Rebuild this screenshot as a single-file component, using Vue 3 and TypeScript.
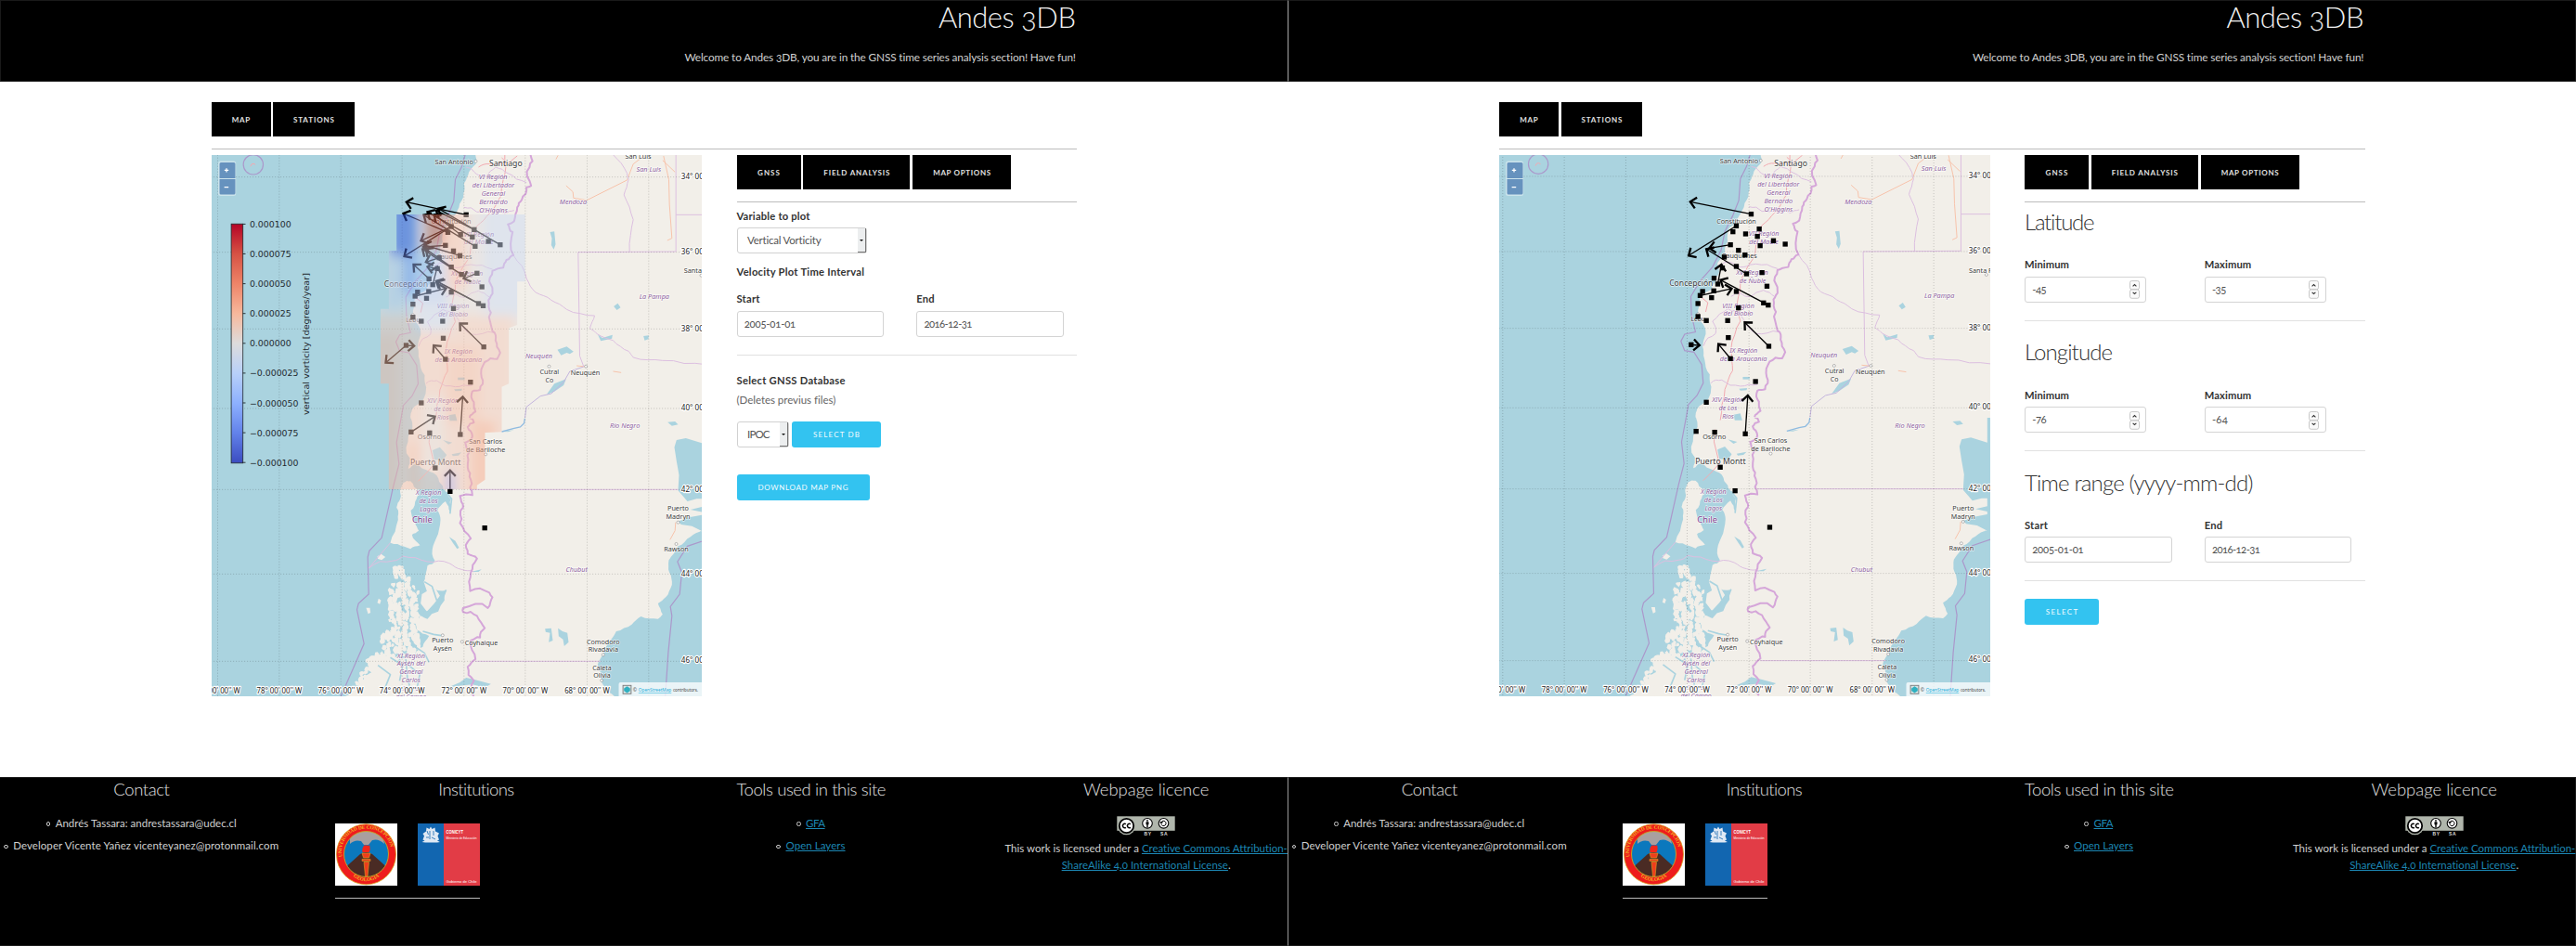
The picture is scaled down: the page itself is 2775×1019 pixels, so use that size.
<script setup lang="ts">
import type { Directive } from 'vue'

type Pt = [number, number]
type Label = [string, number, number, number, number, string]

/* Spreads the letters of an element so that its text is exactly `value` pixels wide. */
const vFit: Directive<HTMLElement, number> = {
  mounted(el, { value }) {
    const n = (el.textContent ?? '').length
    if (n < 2) return
    const gap = (value - el.getBoundingClientRect().width) / (n - 1)
    el.style.letterSpacing = `${gap}px`
    el.style.marginRight = `${-gap}px`
  },
}

function random(seed: number) {
  let s = seed
  return () => {
    s = (s * 16807) % 2147483647
    return s / 2147483647
  }
}

function parse(s: string): Pt[] {
  return s.split(' ').map((p) => p.split(',').map(Number) as Pt)
}

/* Breaks every long segment up with a small displacement, like a natural shoreline. */
function rough(s: string, amount = 0.12, seed = 7): string {
  const rnd = random(seed)
  let pts = parse(s)
  for (let k = 0; k < 2; k++) {
    const out: Pt[] = [pts[0]]
    for (let i = 1; i < pts.length; i++) {
      const [ax, ay] = pts[i - 1]
      const [bx, by] = pts[i]
      const len = Math.hypot(bx - ax, by - ay)
      if (len > 12 && len < 400) {
        const d = (rnd() - 0.5) * 2 * amount
        out.push([(ax + bx) / 2 - (by - ay) * d, (ay + by) / 2 + (bx - ax) * d])
      }
      out.push(pts[i])
    }
    pts = out
  }
  return pts.map((p) => p.map((v) => v.toFixed(1)).join(',')).join(' ')
}

const landNorth =
  rough('395,20 396,50 371,87 358,112 356,157 336,202 316,237 291,264 289,302 276,347 256,372 262,400 250,430 236,457 200,472 196,502 194,547 211,572 218,602 208,642 214,682 231,732 236,772 226,812 191,842 186,872', 0.1) +
  ' 1200,872 1200,20'
const landSouth =
  '186,-6 ' +
  rough('186,0 178,60 183,130 178,165 205,150 240,170 262,180 285,215 300,240 316,262 314,305 298,270 282,285 272,300 282,330 268,390 255,440 264,462 240,478 235,530 250,545 300,558 295,590 240,650 215,640 205,685 245,705 225,740 190,772 150,790 90,762 50,775 62,820 30,850 -4,880 -30,905', 0.16) +
  ' 850,905 ' +
  rough('850,905 800,850 790,800 810,760 830,720 850,690 900,668 930,642 985,650 1000,635 985,600 1010,580 1030,540 1022,500 1020,460 1035,440 1050,415 1090,385 1128,367', 0.1) +
  ' 1095,350 1060,345 1050,335 1085,322 1128,314 1128,305 1090,297 1128,288 1128,262 1110,262 1080,270 1050,235 1053,185 1045,140 1038,95 1045,72 1075,66 1128,82 1128,-6'
const chiloe = rough('162,210 185,205 215,235 205,262 186,300 200,340 212,365 190,378 216,412 185,424 165,416 120,404 145,330 140,290 152,262 155,225', 0.14)

const andesNorth = rough('573,20 570,60 575,120 560,125 545,165 530,190 520,235 500,245 515,270 518,345 495,360 485,385 450,395 445,440 450,460 437,490 445,530 450,590 460,620 475,660 465,680 425,690 415,740 410,780 385,785 390,820 395,850 376,870', 0.2)
const andesSouth = rough('376,0 390,15 370,30 385,60 362,80 375,110 370,160 380,200 385,250 345,253 355,290 345,340 380,390 365,420 370,440 400,455 380,500 378,560 440,565 450,580 435,615 355,615 355,628 400,640 425,680 410,710 380,720 395,780 370,805 390,850 390,900', 0.2)

const provincesNorth = [
  rough('840,20 885,80 890,100 875,150 905,230 893,333', 0.06),
  '1043,20 1043,333 727,335 732,670 745,705',
  '1043,214 1140,214',
  rough('518,345 560,420 590,465 640,490 690,520 780,540 765,580 790,600 840,620 890,655 905,675 1000,685 1140,698', 0.08),
  rough('358,190 400,205 450,195 490,210 520,200', 0.14),
  rough('365,60 390,75 430,90 460,60 500,80 560,110', 0.14),
  rough('262,380 300,370 340,385 380,375 450,390', 0.14),
  rough('300,480 330,470 360,480 405,460 440,480', 0.14),
  rough('211,640 250,600 240,560 290,520 330,540 380,600 455,595', 0.14),
  rough('235,760 270,750 330,770 385,765', 0.14),
]
const provincesSouth = [
  '385,232 1050,232',
  '395,787 800,787',
  rough('50,486 130,462 160,447 240,465 310,470 350,490 390,498', 0.12),
  '50,486 120,404',
]
const maritimeNorth = '362,20 350,60 330,100 325,170 305,220 280,270 268,330 240,385 200,430 170,480 172,540 185,595 150,602 138,625 150,655 180,660 205,700 210,760 190,800 162,830 155,870'
const maritimeSouth = '155,0 140,80 148,150 130,220 92,388 52,430 47,450 50,570 17,600 12,620 35,730 0,810 -40,900'
const roads = [
  rough('490,20 485,100 480,150 440,210 400,250 378,340 335,420 320,500 330,560 300,650 305,720 280,780 265,880', 0.07),
  '480,30 500,48 530,24',
  '200,480 225,500 218,530',
  rough('405,60 440,50 485,45', 0.1),
]
const orangeRoads = [
  '688,120 710,140 712,160 755,167 885,102 905,50 940,24',
  '1003,24 1020,100 1022,180 1030,290 1015,297',
  '1000,38 1040,76',
  '722,702 752,705',
  '840,720 866,724',
  '655,35 662,22',
]
const lakesNorth = [
  '636,270 650,268 654,310 648,326 640,312 642,290',
  '842,510 855,500 864,514 852,522',
  '660,650 690,640 712,656 700,664 690,660 672,668',
  '625,795 650,760 688,745 680,765 650,785',
  '790,600 805,612 838,602 836,614 800,622',
  '938,606 955,604 954,616 942,620',
  '1016,884 1040,882 1050,892 1030,896',
  '338,740 360,740 360,748 338,748',
  '326,778 352,776 350,783 330,784',
  '308,862 330,858 336,880 312,880',
]
const lakesSouth = [
  '256,105 280,95 302,120 290,138 262,135',
  '290,72 320,80 308,86',
  '318,118 350,112 340,122 322,124',
  '310,385 330,398 342,420 336,424 322,404',
  '620,682 640,680 645,720 632,725 636,695 622,692',
  '662,680 676,690 692,695 696,725 682,738 678,716 664,706',
  '380,498 415,490 405,498',
  '365,840 400,848 445,860 425,872 385,862 330,868 290,878 345,855',
  '480,45 520,40 500,46',
]
const channels = [
  '300,556 285,595 250,625 225,630',
  '225,690 260,700 285,704',
  '200,740 230,760 245,790',
  '230,530 255,545 270,590',
  '300,240 318,262 313,310',
  '180,800 215,830 205,880',
  '120,775 160,800 150,850',
  '80,800 120,830 100,880',
  '170,780 175,840 190,895',
]

/* The archipelago: irregular islets on a loose grid, separated by narrow channels. */
function makeIslets(): string[] {
  const rnd = random(41)
  const out: string[] = []
  for (let y = 485; y < 905; y += 13) {
    const left = y < 540 ? 132 : y < 700 ? 116 : y < 760 ? 90 : 60 - (y - 760) * 0.45
    const right = y < 540 ? 186 : 212
    for (let x = left + rnd() * 8; x < right; x += 14) {
      if (rnd() < 0.14) continue
      const cx = x + (rnd() - 0.5) * 10
      const cy = y + (rnd() - 0.5) * 9
      const size = 3 + rnd() * 5
      const pts: string[] = []
      for (let a = 0; a < 9; a++) {
        const r = size + rnd() * 5
        pts.push(`${(cx + Math.cos(a * 0.698) * r).toFixed(1)},${(cy + Math.sin(a * 0.698) * r * 1.2).toFixed(1)}`)
      }
      out.push(pts.join(' '))
    }
  }
  out.push('78,448 90,440 104,450 92,460 80,456', '42,614 54,614 56,630 48,634', '82,584 90,590 86,602 78,598')
  out.push('245,490 262,500 272,520 262,545 280,575 262,600 238,626 218,600 222,570 238,560 228,530')
  return out
}
const islets = makeIslets()

const gridX = [-438, -239, -40, 158, 358, 556, 756, 955]
const gridY = [92, 335, 583, 840, 1102, 1375, 1657]
const lonLabels: [string, number][] = [80, 78, 76, 74, 72, 70, 68].map((d, i) => [`${d}° 00' 00'' W`, gridX[i]])
const latLabels: [string, number][] = [34, 36, 38, 40, 42, 44, 46].map((d, i) => [`${d}° 00' 00'' N`, [99, 341, 590, 845, 1109, 1382, 1661][i]])

const labelsNorth: Label[] = [
  ['San Antonio', 326, 50, 124, 22, 'city'], ['Santiago', 493, 58, 107, 26, 'city'],
  ['VI Región', 452, 99, 92, 21, 'region'], ['del Libertador', 453, 126, 136, 21, 'region'],
  ['General', 453, 153, 76, 21, 'region'], ['Bernardo', 453, 180, 92, 21, 'region'], ["O'Higgins", 453, 207, 92, 21, 'region'],
  ['Constitución', 317, 244, 128, 22, 'city'],
  ['VII Región', 406, 284, 98, 21, 'region'], ['del Maule', 406, 310, 95, 21, 'region'],
  ['Cauquenes', 327, 357, 114, 22, 'city'],
  ['XVI Región', 368, 411, 103, 21, 'region'], ['de Ñuble', 370, 437, 86, 21, 'region'],
  ['Concepción', 171, 447, 142, 26, 'city'],
  ['VIII Región', 323, 517, 104, 21, 'region'], ['del Biobío', 323, 543, 96, 21, 'region'],
  ['Lebu', 193, 560, 46, 22, 'city'],
  ['IX Región', 340, 662, 90, 21, 'region'], ['de la Araucanía', 340, 689, 152, 21, 'region'],
  ['XIV Región', 290, 822, 103, 21, 'region'], ['de Los', 290, 849, 58, 21, 'region'], ['Ríos', 290, 876, 38, 21, 'region'],
  ['San Luis', 921, 34, 84, 22, 'city'], ['San Luis', 955, 74, 80, 21, 'region'],
  ['Mendoza', 711, 181, 88, 21, 'region'], ['La Pampa', 973, 486, 97, 21, 'region'],
  ['Santa Rosa', 1125, 403, 112, 22, 'city'],
  ['Neuquén', 600, 677, 87, 21, 'region'], ['Neuquén', 750, 731, 95, 22, 'city'],
  ['Cutral', 634, 728, 62, 22, 'city'], ['Co', 634, 755, 26, 22, 'city'],
  ['Río Negro', 878, 904, 97, 21, 'region'],
]
const labelsSouth: Label[] = [
  ['Osorno', 246, 70, 76, 22, 'city'], ['San Carlos', 428, 83, 107, 22, 'city'], ['de Bariloche', 428, 110, 127, 22, 'city'],
  ['Puerto Montt', 266, 152, 163, 26, 'city'],
  ['X Región', 243, 249, 83, 21, 'region'], ['de Los', 243, 275, 60, 21, 'region'], ['Lagos', 243, 302, 56, 21, 'region'],
  ['Chile', 223, 340, 65, 28, 'country'],
  ['Puerto', 1050, 301, 69, 22, 'city'], ['Madryn', 1050, 328, 78, 22, 'city'], ['Rawson', 1044, 432, 80, 22, 'city'],
  ['Chubut', 722, 499, 70, 21, 'region'],
  ['Puerto', 289, 726, 70, 22, 'city'], ['Aysén', 289, 752, 60, 22, 'city'], ['Coyhaique', 414, 734, 107, 22, 'city'],
  ['XI Región', 187, 776, 90, 21, 'region'], ['Aysén del', 187, 802, 90, 21, 'region'], ['General', 187, 829, 76, 21, 'region'],
  ['Carlos', 187, 856, 60, 21, 'region'], ['Ibáñez', 187, 882, 66, 21, 'region'], ['del Campo', 187, 908, 100, 21, 'region'],
  ['Comodoro', 808, 731, 107, 22, 'city'], ['Rivadavia', 808, 757, 97, 22, 'city'],
  ['Caleta', 804, 815, 62, 22, 'city'], ['Olivia', 804, 841, 56, 22, 'city'],
]
const townsNorth = parse('396,41 1125,410 633,704 752,704 193,537')
const townsSouth = parse('428,118 1050,338 1044,408 289,703 352,724 808,766 803,849')

const stations = parse(
  '365,214 317,252 306,271 391,262 347,278 385,286 437,300 475,311 394,316 298,313 324,331 345,346 278,353 272,388 317,383 350,407 400,403 245,421 257,440 416,447 208,464 244,462 317,464 237,484 200,477 193,503 405,501 420,508 324,517 193,545 220,558 289,558 291,613 171,636 422,641 298,681 379,755 220,822 187,916 247,919 346,924 265,1032 313,1108 425,1226',
)
const arrowsLeft = parse(
  '365,214 172,173 306,271 162,210 394,316 228,215 385,286 240,205 391,262 268,200 475,311 275,194 347,278 262,214 317,252 165,348 298,313 226,318 345,346 230,312 317,252 219,298 350,407 224,325 278,353 235,367 317,383 235,325 245,421 195,375 257,440 272,382 272,388 240,382 400,403 357,420 420,508 268,428 405,501 272,430 200,477 300,452 422,641 345,565 298,681 260,636 171,636 105,692 171,636 197,638 346,924 354,802 187,916 264,866 313,1108 313,1040',
)
const arrowsRight = parse(
  '365,214 168,174 317,252 163,348 298,313 230,324 350,407 220,327 257,440 269,377 200,477 302,455 420,508 266,427 422,641 344,564 298,681 259,634 171,636 198,638 346,924 354,800',
)
function arrowPaths(pts: Pt[]): { line: string; head: string }[] {
  const out: { line: string; head: string }[] = []
  for (let i = 0; i < pts.length; i += 2) {
    const [ax, ay] = pts[i]
    const [bx, by] = pts[i + 1]
    const t = Math.atan2(ay - by, ax - bx)
    const arm = (d: number) => `${(bx + 26 * Math.cos(t + d)).toFixed(1)} ${(by + 26 * Math.sin(t + d)).toFixed(1)}`
    out.push({ line: `M${ax} ${ay}L${bx} ${by}`, head: `M${arm(0.76)}L${bx} ${by}L${arm(-0.76)}` })
  }
  return out
}

const fieldShape = '140,213 556,213 556,430 530,430 530,570 503,580 503,760 480,770 480,916 426,918 426,1070 400,1088 400,1101 115,1101 115,760 88,760 88,518 115,518 115,330 140,330'
const scaleTicks = ['0.000100', '0.000075', '0.000050', '0.000025', '0.000000', '−0.000025', '−0.000050', '−0.000075', '−0.000100']

const panels = [
  { id: 'analysis', dx: 0, dy: 0, arrows: arrowPaths(arrowsLeft) },
  { id: 'options', dx: -2.7, dy: -0.7, arrows: arrowPaths(arrowsRight) },
]
const ranges = [
  { title: 'Latitude', width: 76, min: '-45', minW: 15.5, max: '-35', maxW: 15.5 },
  { title: 'Longitude', width: 95, min: '-76', minW: 15.5, max: '-64', maxW: 17 },
]
</script>

<template>
  <div class="screen">
    <section v-for="(p, i) in panels" :key="p.id" class="panel">
      <header class="top">
        <h1><span v-fit="148" class="fit">Andes 3DB</span></h1>
        <p><span v-fit="422" class="fit">Welcome to Andes 3DB, you are in the GNSS time series analysis section! Have fun!</span></p>
      </header>

      <main>
        <nav class="tabs">
          <button class="tab" style="width: 64px"><span v-fit="19.5" class="fit">MAP</span></button>
          <button class="tab" style="width: 87.5px"><span v-fit="44" class="fit">STATIONS</span></button>
        </nav>
        <div class="rule first"></div>

        <div class="columns">
          <svg class="map" viewBox="227.5 167 528.5 582.6" width="528.5" height="582.6">
            <defs>
              <clipPath :id="'field-' + p.id"><polygon :points="fieldShape" /></clipPath>
              <linearGradient :id="'scale-' + p.id" x1="0" y1="0" x2="0" y2="1">
                <stop offset="0" stop-color="#b40426" /><stop offset=".125" stop-color="#d65244" />
                <stop offset=".25" stop-color="#ee8468" /><stop offset=".375" stop-color="#f7b89c" />
                <stop offset=".5" stop-color="#dddcdc" /><stop offset=".625" stop-color="#b8d0f9" />
                <stop offset=".75" stop-color="#8db0fe" /><stop offset=".875" stop-color="#6282ea" />
                <stop offset="1" stop-color="#3b4cc0" />
              </linearGradient>
              <filter :id="'soft-' + p.id" x="-60%" y="-60%" width="220%" height="220%"><feGaussianBlur stdDeviation="18" /></filter>
            </defs>
            <rect x="227" y="166" width="530" height="585" fill="#aad3df" />

            <g :transform="`translate(${p.dx} ${p.dy})`">
              <g transform="translate(380 450) scale(.33333)" class="geo">
                <polygon :points="landSouth" class="land" />
                <rect x="1120" y="367" width="30" height="540" fill="#aad3df" />
                <polygon :points="chiloe" class="land" />
                <polygon v-for="s in islets" :key="s" :points="s" class="land" />
                <polyline v-for="s in channels" :key="s" :points="s" class="channel" />
                <polygon v-for="s in lakesSouth" :key="s" :points="s" class="lake" />
                <polyline points="555,0 552,18 540,30 520,34 480,45" class="river" />
                <polyline points="248,40 245,80 262,150 235,180 210,205" class="road" />
                <polyline points="1042,338 1040,365 1024,394" class="road orange" />
                <polyline v-for="s in provincesSouth" :key="s" :points="s" class="province" />
                <polyline :points="maritimeSouth" class="sea-border" />
                <polyline points="1140,395 1080,415 1048,465 1062,500 1055,570 1025,610 1030,640 1018,760 1008,910" class="sea-border" />
                <polyline :points="andesSouth" class="border" />
              </g>
              <g transform="translate(380 160) scale(.33333)" class="geo">
                <polygon :points="landNorth" class="land" />
                <polygon v-for="s in lakesNorth" :key="s" :points="s" class="lake" />
                <polyline points="745,705 700,720 680,755 640,792 605,800 560,835 555,870" class="river pale" />
                <polyline v-for="s in roads" :key="s" :points="s" class="road" />
                <polyline v-for="s in orangeRoads" :key="s" :points="s" class="road orange" />
                <polyline v-for="s in provincesNorth" :key="s" :points="s" class="province" />
                <polyline :points="maritimeNorth" class="sea-border" />
                <polyline :points="andesNorth" class="border" />
                <circle cx="-323" cy="52" r="32" class="sea-border" />
                <path d="M-332 58q2-10 10-9l6 3" class="road" />
              </g>
              <g transform="translate(380 450) scale(.33333)">
                <circle v-for="t in townsSouth" :key="t.join()" :cx="t[0]" :cy="t[1]" r="4.5" class="town" />
                <text v-for="l in labelsSouth" :key="l.join()" :x="l[1]" :y="l[2]" :textLength="l[3]" :font-size="l[4]" lengthAdjust="spacingAndGlyphs" :class="l[5]">{{ l[0] }}</text>
              </g>
              <g transform="translate(380 160) scale(.33333)">
                <circle v-for="t in townsNorth" :key="t.join()" :cx="t[0]" :cy="t[1]" r="4.5" class="town" />
                <text v-for="l in labelsNorth" :key="l.join()" :x="l[1]" :y="l[2]" :textLength="l[3]" :font-size="l[4]" lengthAdjust="spacingAndGlyphs" :class="l[5]">{{ l[0] }}</text>
                <line v-for="x in gridX" :key="'x' + x" :x1="x" :x2="x" y1="20" y2="1775" class="grid" />
                <line v-for="y in gridY" :key="'y' + y" x1="-460" x2="1140" :y1="y" :y2="y" class="grid" />
                <g v-for="(a, n) in p.arrows" :key="n">
                  <path :d="a.line" class="shaft" />
                  <path :d="a.head" class="head" />
                </g>
                <rect v-for="s in stations" :key="s.join()" :x="s[0] - 8" :y="s[1] - 8" width="16" height="16" />
                <g v-if="i === 0" :clip-path="`url(#field-${p.id})`" opacity=".49">
                  <rect x="80" y="210" width="480" height="900" fill="#e4dcdc" />
                  <g :filter="`url(#soft-${p.id})`">
                    <rect x="60" y="540" width="460" height="620" fill="#f3c9b8" />
                    <rect x="60" y="600" width="90" height="540" fill="#f2b9a2" />
                    <rect x="300" y="640" width="110" height="250" fill="#f5b9a2" />
                    <rect x="380" y="880" width="80" height="260" fill="#f8a98a" />
                    <rect x="180" y="950" width="30" height="160" fill="#f7b297" />
                    <rect x="225" y="800" width="70" height="240" fill="#e8d8d2" />
                    <rect x="420" y="180" width="180" height="360" fill="#ccd9f0" />
                    <rect x="105" y="320" width="60" height="200" fill="#c3d0e8" />
                    <rect x="175" y="340" width="130" height="160" fill="#b4cbf5" />
                    <rect x="200" y="500" width="120" height="90" fill="#ccd8ee" />
                    <rect x="120" y="170" width="85" height="180" fill="#2f54dc" />
                    <rect x="165" y="340" width="30" height="130" fill="#5a86f0" />
                    <rect x="234" y="170" width="64" height="150" fill="#dd6448" />
                    <rect x="300" y="200" width="65" height="260" fill="#f6bfaa" />
                    <rect x="304" y="1045" width="20" height="90" fill="#4a74f0" />
                  </g>
                </g>
                <text v-for="l in lonLabels" :key="l[0]" :x="l[1]" y="1761" textLength="146" lengthAdjust="spacingAndGlyphs" class="degree" text-anchor="middle">{{ l[0] }}</text>
              </g>
            </g>
            <text v-for="l in latLabels" :key="l[0]" :x="733.3" :y="160 + p.dy + l[1] / 3" class="degree lat" textLength="49" lengthAdjust="spacingAndGlyphs">{{ l[0] }}</text>

            <g v-if="i === 0">
              <rect x="248.6" y="241.2" width="12.6" height="257.6" :fill="`url(#scale-${p.id})`" stroke="#20272b" stroke-width=".8" />
              <g v-for="(t, n) in scaleTicks" :key="t">
                <path :d="`M261 ${241.4 + n * 32.1}h3`" stroke="#20272b" stroke-width=".9" />
                <text x="268.4" :y="245 + n * 32.1" :textLength="t.length > 8 ? 52.6 : 44.8" class="tick">{{ t }}</text>
              </g>
              <text transform="translate(332.4 447) rotate(-90)" textLength="153" lengthAdjust="spacingAndGlyphs" class="tick">vertical vorticity [degrees/year]</text>
            </g>

            <rect x="234.5" y="173.5" width="19.2" height="37.4" rx="2.5" fill="#fff" fill-opacity=".4" />
            <path d="M236 192v-15.500a1.500 1.500 0 0 1 1.500-1.500h14a1.500 1.500 0 0 1 1.500 1.500v15.500zM236 193h17v15a1.500 1.500 0 0 1-1.500 1.500h-14a1.500 1.500 0 0 1-1.500-1.500z" fill="#6692be" />
            <path d="M241.300 183.400h4.400M243.500 181.200v4.400M241.100 201.700h4.600" stroke="#fff" stroke-width="1.300" />

            <path d="M666 750v-13a2 2 0 0 1 2-2h89v15z" fill="#fff" fill-opacity=".75" />
            <rect x="670.6" y="738.3" width="8.800" height="9" fill="#d9e5e6" stroke="#777" stroke-width=".9" />
            <path d="M675 739.300l3.300 2.300v2.700l-3.300 2.300-3.300-2.300v-2.700z" fill="#2fb0c0" />
            <text x="681.200" y="745.4" class="credit" textLength="4.300">©</text>
            <text x="687.300" y="745.2" class="credit link" textLength="35.500" lengthAdjust="spacingAndGlyphs">OpenStreetMap</text>
            <text x="724.500" y="745.2" class="credit" textLength="27" lengthAdjust="spacingAndGlyphs">contributors.</text>
          </svg>

          <div class="side">
            <nav class="tabs">
              <button class="tab" style="width: 69px"><span v-fit="24" class="fit">GNSS</span></button>
              <button class="tab" style="width: 115.3px"><span v-fit="71" class="fit">FIELD ANALYSIS</span></button>
              <button class="tab" style="width: 106px"><span v-fit="62" class="fit">MAP OPTIONS</span></button>
            </nav>
            <div class="rule"></div>

            <form v-if="i === 0" class="analysis">
              <label class="name variable"><span v-fit="79" class="fit">Variable to plot</span></label>
              <div class="select" style="width: 140px"><span v-fit="80" class="fit">Vertical Vorticity</span><i class="drop"></i></div>
              <label class="name velocity"><span v-fit="137.5" class="fit">Velocity Plot Time Interval</span></label>
              <div class="pair dates">
                <div><label class="name"><span v-fit="25" class="fit">Start</span></label><div class="field date"><span v-fit="55.5" class="fit">2005-01-01</span></div></div>
                <div><label class="name"><span v-fit="19.5" class="fit">End</span></label><div class="field date"><span v-fit="52" class="fit">2016-12-31</span></div></div>
              </div>
              <hr />
              <label class="name db"><span v-fit="117" class="fit">Select GNSS Database</span></label>
              <p class="note"><span v-fit="106.5" class="fit">(Deletes previus files)</span></p>
              <div class="choose">
                <div class="select" style="width: 56.5px"><span v-fit="24.5" class="fit">IPOC</span><i class="drop"></i></div>
                <button class="action" style="width: 96px"><span v-fit="50" class="fit">SELECT DB</span></button>
              </div>
              <button class="action download" style="width: 143px"><span v-fit="97" class="fit">DOWNLOAD MAP PNG</span></button>
            </form>

            <form v-else class="ranges">
              <template v-for="r in ranges" :key="r.title">
                <h2><span v-fit="r.width" class="fit">{{ r.title }}</span></h2>
                <div class="pair">
                  <div>
                    <label class="name"><span v-fit="48" class="fit">Minimum</span></label>
                    <div class="field number"><span v-fit="r.minW" class="fit">{{ r.min }}</span>
                      <svg class="spin" viewBox="0 0 11 20" width="11" height="20"><rect x=".5" y=".5" width="10" height="9.300" rx="2" /><rect x=".5" y="10" width="10" height="9.300" rx="2" /><path d="M3.600 6.300l1.900-1.700 1.900 1.700M3.600 12.800l1.900 1.700 1.900-1.700" /></svg>
                    </div>
                  </div>
                  <div>
                    <label class="name"><span v-fit="50.5" class="fit">Maximum</span></label>
                    <div class="field number"><span v-fit="r.maxW" class="fit">{{ r.max }}</span>
                      <svg class="spin" viewBox="0 0 11 20" width="11" height="20"><rect x=".5" y=".5" width="10" height="9.300" rx="2" /><rect x=".5" y="10" width="10" height="9.300" rx="2" /><path d="M3.600 6.300l1.900-1.700 1.900 1.700M3.600 12.800l1.900 1.700 1.900-1.700" /></svg>
                    </div>
                  </div>
                </div>
                <hr />
              </template>
              <h2><span v-fit="246.5" class="fit">Time range (yyyy-mm-dd)</span></h2>
              <div class="pair">
                <div><label class="name"><span v-fit="25" class="fit">Start</span></label><div class="field date"><span v-fit="55.5" class="fit">2005-01-01</span></div></div>
                <div><label class="name"><span v-fit="19.5" class="fit">End</span></label><div class="field date"><span v-fit="52" class="fit">2016-12-31</span></div></div>
              </div>
              <hr />
              <button class="action" style="width: 80px"><span v-fit="34.5" class="fit">SELECT</span></button>
            </form>
          </div>
        </div>
      </main>

      <footer>
        <div class="cell">
          <h3><span v-fit="60.5" class="fit">Contact</span></h3>
          <ul>
            <li><i class="dot"></i><span v-fit="195" class="fit">Andrés Tassara: andrestassara@udec.cl</span></li>
            <li><i class="dot"></i><span v-fit="286" class="fit">Developer Vicente Yañez vicenteyanez@protonmail.com</span></li>
          </ul>
        </div>
        <div class="cell">
          <h3><span v-fit="82.5" class="fit">Institutions</span></h3>
          <div class="logos">
            <svg viewBox="0 0 67 67" width="67" height="67">
              <defs>
                <path :id="'arc-' + p.id" d="M7.500 36C4.500 17 17 5.700 33.500 5.700S62.500 17 59.500 36" />
                <path :id="'low-' + p.id" d="M14 51C24 66 43 66 53 51" />
                <clipPath :id="'disc-' + p.id"><ellipse cx="33.500" cy="33" rx="24" ry="24.500" /></clipPath>
              </defs>
              <rect width="67" height="67" fill="#fff" />
              <ellipse cx="33.500" cy="33.300" rx="32" ry="32.500" fill="#ee1c1c" stroke="#d8a31c" stroke-width=".8" />
              <g :clip-path="`url(#disc-${p.id})`">
                <rect width="67" height="67" fill="#0b78bd" />
                <path d="M6 52L27 33q6-4 13 0L61 52 50 66H18z" fill="#4a2b24" />
                <path d="M16 22V8h34l3 14q-6-6-13-4l-4 5h-5l-3-4q-7-2-12 3z" fill="#a99f9f" />
              </g>
              <ellipse cx="33.500" cy="33" rx="24" ry="24.500" fill="none" stroke="#d8a31c" stroke-width=".9" />
              <path d="M29.500 31q-1-5 2.500-8 1 2 1.700 0 2.300 2 3.300 0 1.500 5-.5 8z" fill="#f3261b" />
              <path d="M29 32h9l-1.500 5h-6zM29 38.500h9v2h-9zM31 41.500h5.500L35 57h-2.500z" fill="#ef3d1c" stroke="#e0a020" stroke-width=".6" />
              <text class="seal"><textPath :href="'#arc-' + p.id" textLength="82">UNIVERSIDAD DE CONCEPCION</textPath></text>
              <text class="seal"><textPath :href="'#low-' + p.id" startOffset="8" textLength="31">GEOLOGIA</textPath></text>
            </svg>
            <svg viewBox="0 0 67 67" width="67" height="67">
              <rect width="28" height="67" fill="#1266b0" />
              <rect x="28" width="39" height="67" fill="#e23c46" />
              <path d="M14 3.500l1.500 2.500 3-1.500.5 4 4 2-1.500 3 1.500 4-2 1 3 1.500-3 .5H8l-3.500-.5 3-1.500-2-1L7 13.500 5.500 11l3.500-2.500.5-4 3 1.500z" fill="#dfe9f4" />
              <path d="M10 8l1.500 4M17 8v5M9 15h3M15 15l4 2M13 8v9" stroke="#1266b0" stroke-width=".8" fill="none" />
              <text x="30.500" y="11.300" class="gov" font-size="5" font-weight="700" textLength="18.500" lengthAdjust="spacingAndGlyphs">CONICYT</text>
              <text x="30.500" y="16.800" class="gov" font-size="3.300" textLength="33" lengthAdjust="spacingAndGlyphs">Ministerio de Educación</text>
              <text x="30.500" y="63.500" class="gov" font-size="4" textLength="33" lengthAdjust="spacingAndGlyphs">Gobierno de Chile</text>
            </svg>
          </div>
          <div class="underline"></div>
        </div>
        <div class="cell">
          <h3><span v-fit="161" class="fit">Tools used in this site</span></h3>
          <ul>
            <li><i class="dot"></i><a v-fit="21" class="fit">GFA</a></li>
            <li><i class="dot"></i><a v-fit="64" class="fit">Open Layers</a></li>
          </ul>
        </div>
        <div class="cell">
          <h3><span v-fit="135.5" class="fit">Webpage licence</span></h3>
          <svg class="badge" viewBox="0 0 63 22" width="63" height="22">
            <rect width="63" height="22" fill="#000" />
            <rect x=".3" y=".3" width="62.4" height="15.500" fill="#b0b6ac" />
            <circle cx="10.500" cy="10.500" r="9.800" fill="#b0b6ac" />
            <circle cx="10.500" cy="10.500" r="7.700" fill="#fff" stroke="#000" stroke-width="1.800" />
            <path d="M9.900 8.700a2.200 2.200 0 1 0 0 3.600M14.900 8.700a2.200 2.200 0 1 0 0 3.600" fill="none" stroke="#000" stroke-width="1.500" />
            <circle cx="33" cy="7.800" r="5.300" fill="#fff" stroke="#000" stroke-width="1.100" />
            <circle cx="33" cy="4.900" r=".9" /><path d="M31.500 6.300h3v3h-.8v3h-1.400v-3h-.8z" />
            <circle cx="50.500" cy="7.800" r="5.300" fill="#fff" stroke="#000" stroke-width="1.100" />
            <path d="M48 6.600a2.700 2.700 0 1 1 0 2.600M46.800 6.600h2.600l-1.300 1.700z" fill="none" stroke="#000" stroke-width="1" />
            <text x="29.500" y="21.200" class="by" textLength="7.500">BY</text>
            <text x="47" y="21.200" class="by" textLength="7.500">SA</text>
          </svg>
          <p class="licence">
            <span><b v-fit="144.5" class="fit">This work is licensed under a</b><a v-fit="157" class="fit gap">Creative Commons Attribution-</a></span>
            <span><a v-fit="179.5" class="fit">ShareAlike 4.0 International License</a><b>.</b></span>
          </p>
        </div>
      </footer>
    </section>
  </div>
</template>

<style>
body { background: #fff; }
</style>

<style scoped>
.screen { display: flex; width: 2775px; height: 1019px; overflow: hidden; font-family: Lato, 'Open Sans', sans-serif; font-size: 11.5px; color: #333; font-variant-numeric: oldstyle-nums; }
.panel { flex: none; width: 1387.5px; height: 1019px; display: flex; flex-direction: column; }
.fit { display: inline-block; white-space: nowrap; }
h1, h2, h3, p, ul { margin: 0; padding: 0; font-weight: 300; }
.top { box-sizing: border-box; height: 88px; padding-right: 227.5px; background: #000; border: 1px solid #1a1a1a; color: #f2f2f2; text-align: right; }
.top h1 { height: 36px; line-height: 34px; font-size: 31px; }
.top p { margin-top: 15.5px; height: 17px; line-height: 17px; font-size: 11.8px; font-weight: 400; color: #d0d0d0; }
.panel:first-child .top, .panel:first-child footer { border-right-color: #999; }
main { height: 749px; box-sizing: border-box; padding: 22px 227.5px 0; }
.tabs { display: flex; gap: 2.7px; height: 37px; }
.tab, .action { flex: none; display: flex; align-items: center; justify-content: center; box-sizing: border-box; border: 0; padding: 0; margin: 0; font-family: Lato, sans-serif; font-weight: 700; font-size: 8px; color: #fff; background: #000; }
.tab { height: 37px; color: #e0e0e0; }
.rule { height: 1px; background: #bcbcbc; margin-top: 13px; }
.rule.first { margin: 13px 0 6px; }
.columns { display: flex; gap: 37.5px; }
.map { flex: none; display: block; }
.side { flex: 1; min-width: 0; }
.name { display: block; height: 14px; line-height: 15.5px; font-weight: 700; font-size: 11.2px; color: #333; }
form .name + .field { margin-top: 6.6px; }
.variable { margin-top: 7px; }
.select { position: relative; box-sizing: border-box; height: 28px; line-height: 26px; border: 1px solid #d1d1d1; border-radius: 3px; padding-left: 10.5px; font-size: 11.5px; color: #555; }
.variable + .select { margin-top: 6px; }
.drop { position: absolute; right: 0; top: 0; width: 8px; height: 25px; background: #eceeef; border-right: 1px solid #777; border-bottom: 1px solid #777; }
.drop::after { content: ''; position: absolute; left: 2px; top: 12px; border: 2px solid transparent; border-top: 2.500px solid #111; border-bottom: 0; }
.velocity { margin-top: 11.8px; }
.pair { display: grid; grid-template-columns: 158.5px 158.5px; gap: 35.2px; }
.dates { margin-top: 15.6px; }
.field { position: relative; box-sizing: border-box; height: 27.6px; line-height: 26px; border: 1px solid #d4d4d4; border-radius: 3px; padding-left: 7.2px; color: #505050; font-size: 11.3px; }
.number { width: 131px; }
.spin { position: absolute; right: 6.5px; top: 3.5px; fill: #fafafa; stroke: #bbb; stroke-width: .8; }
.spin path { fill: none; stroke: #333; stroke-width: 1.100; }
hr { height: 1px; border: 0; margin: 19.400px 0 0; background: #e1e1e1; }
.db { margin-top: 19px; }
.note { margin-top: 7.4px; height: 14px; line-height: 15px; color: #666; font-weight: 400; }
.choose { display: flex; gap: 3px; margin-top: 16.600px; }
.action { height: 28px; border-radius: 3px; background: #33c3f0; font-weight: 400; color: #f4fbfe; }
.download { margin-top: 29px; }
.ranges h2 { height: 26px; line-height: 27px; font-size: 24px; color: #333; }
.ranges h2:first-child { margin-top: 7.2px; }
.ranges hr + h2 { margin-top: 19.4px; }
.ranges .pair { margin-top: 26.2px; }
.ranges .action { margin-top: 18.500px; }

footer { flex: 1; box-sizing: border-box; display: flex; gap: 55.500px; background: #000; border: 1px solid #1a1a1a; border-left: 0; color: #d0d0d0; }
.cell { flex: none; width: 305.200px; text-align: center; }
.cell:last-child { margin-right: -4px; }
h3 { height: 26px; line-height: 25px; font-size: 18.500px; color: #e0e0e0; }
ul { list-style: none; margin-top: 10.500px; font-weight: 400; }
li { display: flex; justify-content: center; align-items: center; height: 24.700px; line-height: 24.700px; }
.dot { flex: none; width: 2.600px; height: 2.600px; border: 1px solid #ccc; border-radius: 50%; margin: 1px 5.500px 0 -1px; }
a { color: #1c87b4; text-decoration: underline; }
b { font-weight: 400; }
.logos { display: flex; gap: 22px; margin-top: 23px; height: 67px; }
.underline { width: 156px; height: 1px; background: #bbb; margin-top: 13px; }
.badge { display: block; margin: 14.500px auto 0 121px; }
.licence { font-size: 11.500px; margin-top: 4.500px; font-weight: 400; }
.licence > span { display: flex; justify-content: center; height: 17.500px; line-height: 17.500px; white-space: nowrap; }
.gap { margin-left: 3px; }
.seal { font-family: 'Liberation Serif', serif; font-size: 5.500px; font-weight: 700; fill: #f3b521; }
.gov { font-family: 'Liberation Sans', sans-serif; fill: #fff; }
.by { font-family: 'Liberation Sans', sans-serif; font-size: 5px; font-weight: 700; fill: #ddd; }

.land { fill: #f2efe9; }
.lake { fill: #aad3df; }
.channel { fill: none; stroke: #aad3df; stroke-width: 5; stroke-linejoin: round; }
.river { fill: none; stroke: #8fbbe0; stroke-width: 4; }
.river.pale { stroke: #c3b4dd; stroke-width: 3; }
.road { fill: none; stroke: #f3a9b0; stroke-width: 3; }
.road.orange { stroke: #f7c3ab; }
.province { fill: none; stroke: #dcbfe0; stroke-width: 3; }
.sea-border { fill: none; stroke: #ab98cb; stroke-width: 3.600; }
.border { fill: none; stroke: #d5a6d9; stroke-width: 6; stroke-linejoin: round; }
.town { fill: #fff; stroke: #777; stroke-width: 1.500; }
.city, .region, .country { font-family: 'Noto Sans', sans-serif; text-anchor: middle; paint-order: stroke; stroke: #fff; stroke-opacity: .7; stroke-width: 4; stroke-linejoin: round; fill: #3a3a3a; }
.region { font-style: italic; fill: #8f62a0; }
.country { fill: #86408f; }
.grid { stroke: #000; stroke-opacity: .2; stroke-width: 3; stroke-dasharray: 3 6; }
.shaft { stroke: #000; stroke-width: 4; fill: none; }
.head { stroke: #000; stroke-width: 7; fill: none; }
.degree { font-family: 'Noto Sans', sans-serif; font-size: 25px; font-variant-numeric: normal; paint-order: stroke; stroke: #fff; stroke-width: 7; stroke-linejoin: round; fill: #222; }
.lat { font-size: 8.300px; stroke-width: 2.300px; }
.tick { font-family: 'DejaVu Sans', sans-serif; font-size: 9.400px; font-variant-numeric: normal; fill: #1f2a2f; }
.credit { font-family: 'Noto Sans', sans-serif; font-size: 5.200px; fill: #444; }
.credit.link { fill: #1eaedb; text-decoration: underline; }
</style>
